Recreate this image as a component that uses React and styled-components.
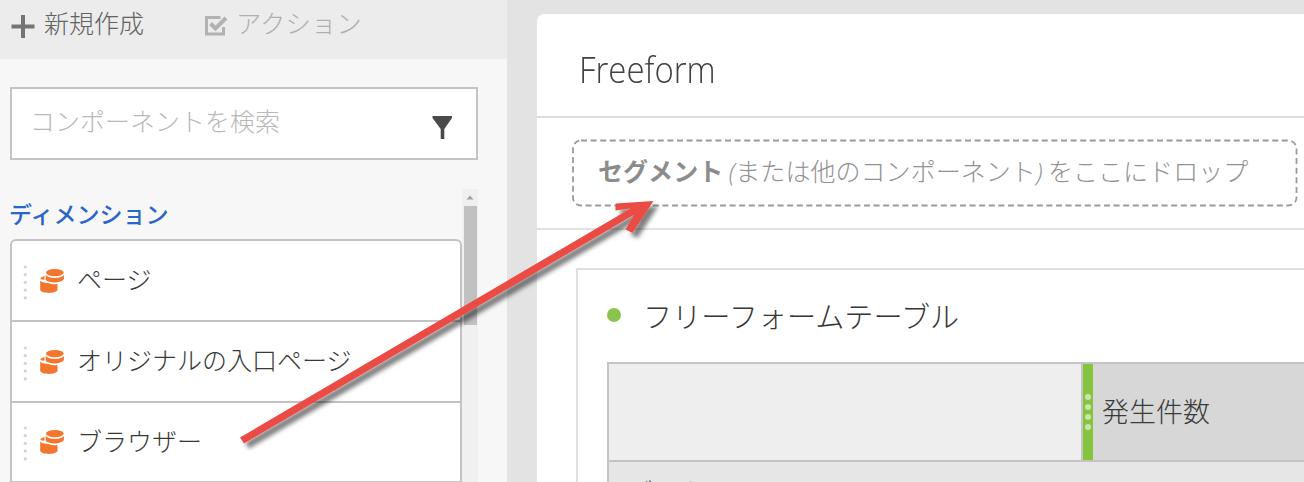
import React from "react";
import styled, { createGlobalStyle } from "styled-components";

const Global = createGlobalStyle`
  *, *::before, *::after { box-sizing: border-box; }
  body { margin: 0; overflow: hidden; }
  body, input { font-family: "Noto Sans CJK JP", "Noto Sans", sans-serif; font-weight: 300; }
`;

const Screen = styled.div`
  position: relative;
  display: flex;
  width: 1304px;
  height: 482px;
  overflow: hidden;
  background: #e3e3e3;
`;

const Sidebar = styled.aside`
  flex: none;
  width: 507px;
  height: 482px;
  background: #f7f7f7;
`;

const Toolbar = styled.header`
  display: flex;
  height: 59px;
  background: #ececec;
  padding-left: 11px;
`;

const ToolButton = styled.div`
  display: flex;
  align-items: flex-start;
  width: ${(p) => p.$width}px;
  color: ${(p) => p.$color};
  font-size: ${(p) => p.$size}px;
  line-height: 36px;
  white-space: nowrap;
  padding-top: 4px;
  svg { flex: none; margin-right: ${(p) => p.$gap}px; margin-top: 10px; }
`;

const SearchBox = styled.div`
  display: flex;
  justify-content: space-between;
  width: 468px;
  height: 73px;
  margin: 28px 0 0 10px;
  padding: 13px 23px 0 18px;
  border: 2px solid #c4c4c4;
  background: #fff;
  color: #b8b8b8;
  font-size: 25px;
  line-height: 36px;
  svg { margin-top: 13px; }
`;

const ListPane = styled.section`
  display: flex;
  width: 478px;
  height: 293px;
  margin-top: 29px;
  padding-left: 10px;
`;

const ListColumn = styled.div`
  width: 452px;
`;

const ListTitle = styled.h2`
  height: 50px;
  margin: 0 0 0 -1px;
  padding-top: 9px;
  color: #2a65c8;
  font-size: 23px;
  font-weight: 500;
  line-height: 30px;
`;

const List = styled.ul`
  margin: 0;
  padding: 0;
  list-style: none;
  border: 2px solid #c3c3c3;
  border-radius: 6px 6px 0 0;
  background: #fff;
`;

const Item = styled.li`
  display: flex;
  align-items: center;
  height: 81px;
  padding-left: 11px;
  border-bottom: 2px solid #c3c3c3;
  color: #383838;
  font-size: 25px;
  line-height: 36px;
  svg { margin: 4px 12px 0 0; }
  span { margin-top: -5px; }
  &:last-child { height: 78px; border-bottom: 0; }
`;

const ScrollTrack = styled.div`
  width: 16px;
  background: #f0f0f0;
  display: flex;
  flex-direction: column;
  align-items: center;
  svg { display: block; }
`;

const ScrollThumb = styled.div`
  width: 13px;
  height: 119px;
  background: #c1c1c1;
`;

const Panel = styled.main`
  flex: none;
  width: 780px;
  height: 500px;
  margin: 14px 0 0 30px;
  border-radius: 7px 0 0 0;
  background: #fff;
`;

const PanelTitle = styled.h1`
  height: 104px;
  margin: 0;
  padding: 31px 0 0 42px;
  border-bottom: 2px solid #dcdcdc;
  color: #404040;
  font-family: "Open Sans", "Noto Sans", sans-serif;
  font-size: 36px;
  font-weight: 300;
  line-height: 50px;
`;

const FitText = styled.span`
  display: inline-block;
  transform: scaleX(${(p) => p.$scale});
  transform-origin: left center;
  white-space: nowrap;
`;

const DropRow = styled.section`
  height: 112px;
  padding: 21px 0 0 35px;
  border-bottom: 2px solid #e2e2e2;
`;

const DropZone = styled.div`
  position: relative;
  width: 726px;
  height: 68px;
  padding: 13px 0 0 26px;
  color: #929292;
  font-size: 25.06px;
  line-height: 36px;
  white-space: nowrap;
  strong { font-weight: 700; color: #8c8c8c; }
  i { font-family: "Open Sans", sans-serif; }
`;

const DashOutline = styled.svg`
  position: absolute;
  inset: 0;
`;

const TableCard = styled.section`
  width: 760px;
  margin: 38px 0 0 39px;
  border: 2px solid #e0e0e0;
  padding-left: 29px;
`;

const CardTitle = styled.h3`
  display: flex;
  align-items: center;
  gap: 22px;
  height: 92px;
  margin: 0;
  padding-bottom: 2px;
  color: #363636;
  font-size: 29.15px;
  font-weight: 300;
  line-height: 40px;
`;

const Dot = styled.i`
  width: 14px;
  height: 14px;
  border-radius: 50%;
  background: #8bc34f;
`;

const Table = styled.div`
  border: 2px solid #c4c4c4;
  background: #e6e6e6;
`;

const HeadRow = styled.div`
  display: flex;
  height: 98px;
  border-bottom: 2px solid #c4c4c4;
  background: #d7d7d7;
`;

const BlankCell = styled.div`
  width: 474px;
  border-right: 2px solid #c4c4c4;
  background: #eee;
`;

const Handle = styled.div`
  display: flex;
  flex-direction: column;
  align-items: center;
  justify-content: center;
  gap: 4px;
  width: 10px;
  background: #86c440;
  i { width: 6px; height: 6px; border-radius: 50%; background: #c9e6a9; }
`;

const Metric = styled.div`
  padding: 29px 0 0 9px;
  color: #3a3a3a;
  font-size: 27px;
  line-height: 36px;
`;

const BodyRow = styled.div`
  height: 80px;
  padding: 11px 0 0 19px;
  color: #383838;
  font-size: 25px;
  line-height: 36px;
`;

const ArrowLayer = styled.svg`
  position: absolute;
  left: 0;
  top: 0;
  pointer-events: none;
`;

const PlusIcon = () => (
  <svg width="24" height="24" viewBox="0 0 24 24" fill="#747474">
    <path d="M0.5 10.5h9.5V1h4v9.5h9.5v4H14V24h-4v-9.5H0.5z" />
  </svg>
);

const CheckIcon = () => (
  <svg width="24" height="24" viewBox="0 0 24 24" fill="none" stroke="#b2b2b2">
    <path d="M16.5 3.5H2.5v16.5h17v-7" strokeWidth="3" />
    <path d="M6.5 9.5l5 5L22 4" strokeWidth="4" />
  </svg>
);

const FunnelIcon = () => (
  <svg width="21" height="25" viewBox="0 0 21 25">
    <path d="M0.5 1h19.5v2L12.3 14v10H8.7V14L0.5 3z" fill="#4a4a4a" />
  </svg>
);

const GripCoins = () => (
  <svg width="42" height="36" viewBox="0 0 42 36">
    <g fill="#d2d2d2">
      {[2, 9.7, 17.4, 25.1, 32.8].map((y) => (
        <circle key={y} cx="2.2" cy={y} r="1.6" />
      ))}
    </g>
    <g fill="#f2762e">
      <ellipse cx="31.8" cy="7.6" rx="8.8" ry="3.6" />
      <path d="M22.7 9.8c2.3 4.1 16.1 4.1 18.2 0v4.2c-2.3 4.4-14.8 4.4-18.2 1z" />
      <path d="M17.2 13.4q1.2-1.8 4.3-2.5v3.8q-3.3-.1-4.3-1.3z" />
      <path d="M17.2 15.8q2.2 2.2 8.2 2.1 3.2 1.7 9.1 1.2v6c-2.2 3.8-15.3 3.8-17.3 0z" />
    </g>
  </svg>
);

const ScrollUp = () => (
  <svg width="16" height="17" viewBox="0 0 16 17">
    <path d="M4.5 10.5l3.5-4 3.5 4z" fill="#a2a2a2" />
  </svg>
);

const items = ["ページ", "オリジナルの入口ページ", "ブラウザー"];

export default function App() {
  return (
    <>
      <Global />
      <Screen>
        <Sidebar>
          <Toolbar>
            <ToolButton $width={193} $color="#626262" $gap={9} $size={25}>
              <PlusIcon />
              新規作成
            </ToolButton>
            <ToolButton $width={200} $color="#b0b0b0" $gap={8} $size={25.4}>
              <CheckIcon />
              アクション
            </ToolButton>
          </Toolbar>
          <SearchBox>
            コンポーネントを検索
            <FunnelIcon />
          </SearchBox>
          <ListPane>
            <ListColumn>
              <ListTitle>ディメンション</ListTitle>
              <List>
                {items.map((name) => (
                  <Item key={name}>
                    <GripCoins />
                    <span>{name}</span>
                  </Item>
                ))}
              </List>
            </ListColumn>
            <ScrollTrack>
              <ScrollUp />
              <ScrollThumb />
            </ScrollTrack>
          </ListPane>
        </Sidebar>
        <Panel>
          <PanelTitle>
            <FitText $scale={0.915}>Freeform</FitText>
          </PanelTitle>
          <DropRow>
            <DropZone>
              <DashOutline width="726" height="68">
                <rect x="1" y="1.5" width="723.5" height="65" rx="8" fill="none" stroke="#9a9a9a" strokeWidth="1.8" strokeDasharray="6 3.6" />
              </DashOutline>
              <strong>セグメント</strong> <i>(</i>または他のコンポーネント<i>)</i> をここにドロップ
            </DropZone>
          </DropRow>
          <TableCard>
            <CardTitle>
              <Dot />
              フリーフォームテーブル
            </CardTitle>
            <Table>
              <HeadRow>
                <BlankCell />
                <Handle>
                  <i />
                  <i />
                  <i />
                  <i />
                </Handle>
                <Metric>発生件数</Metric>
              </HeadRow>
              <BodyRow>ブラウザー</BodyRow>
            </Table>
          </TableCard>
        </Panel>
        <ArrowLayer width="1304" height="482" viewBox="0 0 1304 482">
          <defs>
            <filter id="shadow" x="-5%" y="-5%" width="115%" height="115%">
              <feDropShadow dx="5" dy="5" stdDeviation="2" floodColor="#000" floodOpacity="0.5" />
            </filter>
          </defs>
          <path
            d="M240 437.5L630.5 208.5L615.5 210.5V203.5L653.5 201L632.5 233L625.5 229.5L634 214.8L244 443.5z"
            fill="#ea4b45"
            filter="url(#shadow)"
          />
        </ArrowLayer>
      </Screen>
    </>
  );
}
